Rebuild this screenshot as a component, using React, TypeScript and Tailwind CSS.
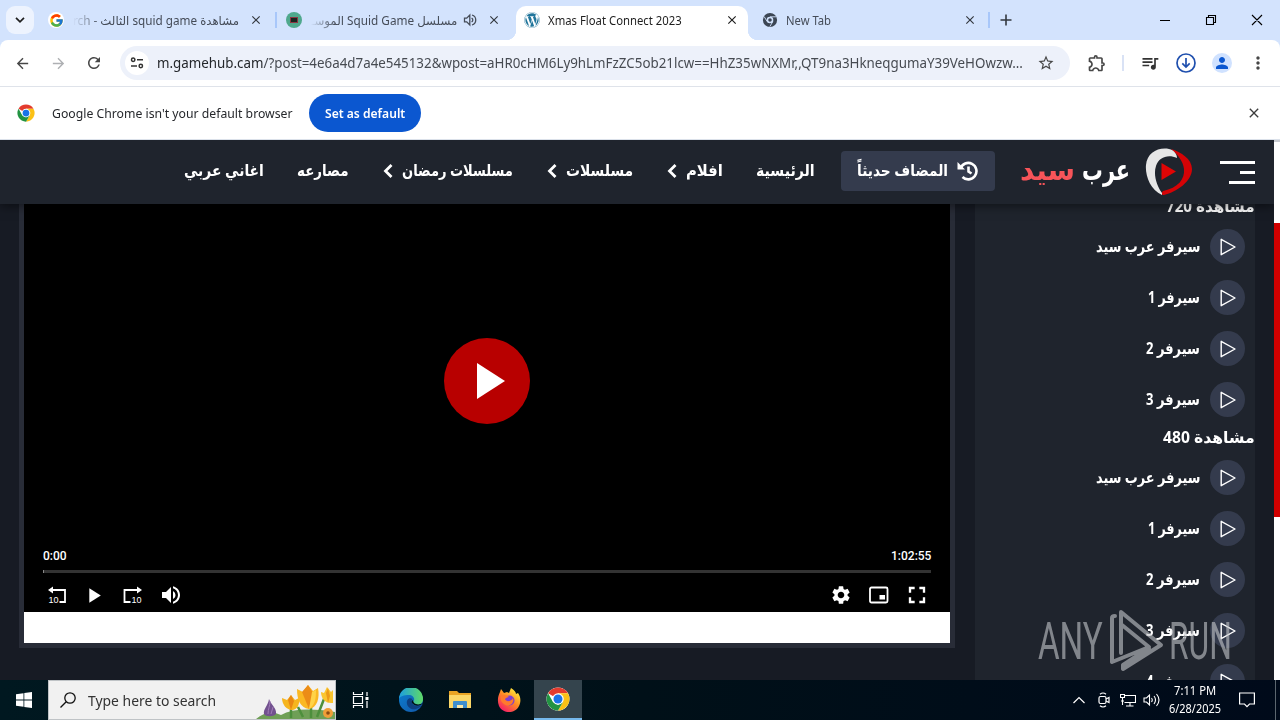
import { useLayoutEffect, useRef, useState } from "react"
import type { ReactNode } from "react"
import { FcGoogle } from "react-icons/fc"
import { FaWordpress } from "react-icons/fa"
import {
  MdArrowBack,
  MdArrowForward,
  MdClose,
  MdFullscreen,
  MdMoreVert,
  MdOutlineExtension,
  MdPerson,
  MdPlayArrow,
  MdQueueMusic,
  MdRefresh,
  MdSettings,
  MdStarBorder,
  MdVolumeUp,
} from "react-icons/md"

type FitProps = { w: number; rtl?: boolean; className?: string; children: ReactNode }

// Squeezes or stretches one line of text so it takes exactly `w` pixels
const Fit = ({ w, rtl, className = "", children }: FitProps) => {
  const ref = useRef<HTMLSpanElement>(null)
  const [scale, setScale] = useState(1)

  useLayoutEffect(() => {
    if (ref.current) setScale(w / ref.current.offsetWidth)
  }, [w])

  return (
    <span className={`block shrink-0 ${className}`} style={{ width: w }}>
      <span
        ref={ref}
        dir={rtl ? "rtl" : "ltr"}
        className="inline-block whitespace-nowrap origin-left"
        style={{ transform: `scaleX(${scale})` }}
      >
        {children}
      </span>
    </span>
  )
}

const ChromeLogo = ({ className = "" }) => (
  <svg viewBox="0 0 48 48" className={className}>
    <circle cx="24" cy="24" r="23" fill="#fff" />
    <path d="M24 24 4.1 12.5A23 23 0 0 1 43.9 12.5H24Z" fill="#e33b2e" />
    <path d="M24 12.5h19.9A23 23 0 0 1 24 47l10-17.2Z" fill="#fbc116" />
    <path d="M4.1 12.5 14 29.8 24 35.5l10-5.7L24 47A23 23 0 0 1 4.1 12.5Z" fill="#229342" />
    <circle cx="24" cy="24" r="11.5" fill="#fff" />
    <circle cx="24" cy="24" r="9" fill="#1a73e8" />
  </svg>
)

const ChromeMono = () => (
  <svg viewBox="0 0 16 16" className="w-4 h-4" fill="none" stroke="#3c4654">
    <circle cx="8" cy="8" r="5.2" strokeWidth="3.8" />
    <circle cx="8" cy="8" r="2.4" fill="#3c4654" stroke="#d3e3fd" strokeWidth="1.2" />
    <path d="M8 4.8h6M5.2 9.6 2.2 4.6M10.8 9.6l-3 5" stroke="#d3e3fd" strokeWidth=".9" />
  </svg>
)

const Separator = () => <div className="w-0.5 h-4 bg-[#a8c7fa] shrink-0"></div>

const TabStrip = () => {
  return (
    <div className="h-10 bg-[#d3e3fd] flex items-center text-[12px] text-[#454c58] pl-1.5">
      <div className="w-7 h-7 rounded-[9px] bg-[#edf3fe] flex items-center justify-center">
        <svg viewBox="0 0 10 6" className="w-2.5 h-1.5" fill="none" stroke="#1f1f1f" strokeWidth="1.7"><path d="m1 .8 4 4 4-4" /></svg>
      </div>

      <div className="w-[241px] pl-3.5 flex items-center shrink-0">
        <div className="w-4 h-4 rounded-full bg-white flex items-center justify-center"><FcGoogle size={15} /></div>
        <Fit w={166} rtl className="mt-px ml-[9px] [mask-image:linear-gradient(to_right,transparent,black_28px)]">مشاهدة squid game الثالث - rch</Fit>
        <MdClose size={14} className="ml-2.5 text-[#33383f]" />
      </div>
      <Separator />

      <div className="w-[239px] pl-[9px] flex items-center shrink-0">
        <div className="w-4 h-4 rounded-full bg-[#4fa88d] flex items-center justify-center"><div className="w-2 h-1.5 bg-[#17251f] border border-[#8c3542]"></div></div>
        <Fit w={146} rtl className="mt-px ml-[9px] [mask-image:linear-gradient(to_right,transparent,black_24px)]">مسلسل Squid Game الموسـ</Fit>
        <svg viewBox="0 0 14 14" className="w-3.5 h-3.5 ml-1.5" fill="none" stroke="#454c58" strokeWidth="1.3"><path d="M1.5 5.2h2.2L6.8 2v10L3.7 8.8H1.5ZM8.6 5c1.6 1 1.6 3 0 4M9 2c5 1.5 5 8.5 0 10" /></svg>
        <MdClose size={14} className="ml-[10px] text-[#33383f]" />
      </div>

      <div className="relative w-[232px] h-[34px] mt-1.5 pb-1.5 px-2 bg-white rounded-t-[10px] flex items-center shrink-0 text-[#1f1f1f]">
        <div className="absolute -left-2.5 bottom-0 w-2.5 h-2.5 bg-[radial-gradient(circle_at_0_0,transparent_10px,white_10.5px)]"></div>
        <div className="absolute -right-2.5 bottom-0 w-2.5 h-2.5 bg-[radial-gradient(circle_at_100%_0,transparent_10px,white_10.5px)]"></div>
        <FaWordpress size={16} className="text-[#21759b]" />
        <Fit w={134} className="mt-0.5 ml-2">Xmas Float Connect 2023</Fit>
        <MdClose size={14} className="ml-auto mr-px" />
      </div>

      <div className="w-[240px] pl-3.5 flex items-center shrink-0">
        <ChromeMono />
        <Fit w={45} className="mt-0.5 ml-2">New Tab</Fit>
        <MdClose size={14} className="ml-auto mr-[11px] text-[#33383f]" />
      </div>
      <Separator />
      <svg viewBox="0 0 12 12" className="w-3 h-3 ml-2.5" stroke="#33383f" strokeWidth="1.6"><path d="M6 .5v11M.5 6h11" /></svg>

      <svg viewBox="0 0 104 12" className="w-[104px] h-3 ml-auto mr-[17px]" fill="none" stroke="#000" strokeWidth="1.1">
        <path d="M1 6.5h10M47.5 3.5h7v7h-7ZM49.5 3.5v-2h7v7h-2M93 1l10 10M103 1 93 11" />
      </svg>
    </div>
  )
}

const Toolbar = () => {
  return (
    <div className="bg-[#d3e3fd]">
      <div className="h-[47px] bg-white rounded-t-lg border-b border-[#dfe3ea] flex items-center px-1 text-[#474747]">
        <div className="w-9 flex justify-center"><MdArrowBack size={17} /></div>
        <div className="w-9 flex justify-center text-[#aeb0b3]"><MdArrowForward size={17} /></div>
        <div className="w-9 flex justify-center"><MdRefresh size={18} /></div>

        <div className="w-[950px] h-[34px] ml-2 rounded-full bg-[#edf1fa] flex items-center pl-[5px] pr-[15px] shrink-0">
          <div className="w-6 h-6 rounded-full bg-white flex items-center justify-center">
            <svg viewBox="0 0 14 12" className="w-3.5 h-3" fill="none" stroke="#333" strokeWidth="1.5">
              <circle cx="3.2" cy="2.8" r="1.7" />
              <circle cx="10.8" cy="9" r="1.7" />
              <path d="M7 2.8h6M1 9h6" />
            </svg>
          </div>
          <Fit w={866} className="ml-2 -mt-0.5 text-[14px] text-[#474b52]">
            <span className="text-[#24272b]">m.gamehub.cam</span>/?post=4e6a4d7a4e545132&amp;wpost=aHR0cHM6Ly9hLmFzZC5ob21lcw==HhZ35wNXMr,,QT9na3HkneqgumaY39VeHOwzw...
          </Fit>
          <MdStarBorder size={18} className="ml-auto" />
        </div>

        <div className="w-9 ml-[9px] flex justify-center"><MdOutlineExtension size={20} /></div>
        <div className="w-0.5 h-4 mx-[7px] bg-[#d9e2f5]"></div>
        <div className="w-9 ml-px flex justify-center"><MdQueueMusic size={20} className="text-[#333]" /></div>
        <div className="w-9 flex justify-center">
          <svg viewBox="0 0 20 20" className="w-5 h-5" fill="none" stroke="#1f4fae" strokeWidth="1.7">
            <circle cx="10" cy="10" r="9" />
            <path d="M10 5v9M6.3 10.3l3.7 3.7 3.7-3.7" />
          </svg>
        </div>
        <div className="w-9 flex justify-center">
          <div className="w-5 h-5 rounded-full bg-[#d0e2ff] text-[#0b57d0] flex items-center justify-center"><MdPerson size={18} /></div>
        </div>
        <div className="w-9 flex justify-center"><MdMoreVert size={20} /></div>
      </div>
    </div>
  )
}

const InfoBar = () => {
  return (
    <div className="h-[53px] bg-white border-b border-[#dbe1ea] flex items-center pl-[17px] pr-[18px] text-[13px] text-[#26282c]">
      <ChromeLogo className="w-[18px] h-[18px]" />
      <Fit w={241} className="ml-[17px] mt-px">Google Chrome isn't your default browser</Fit>
      <button className="w-28 h-[38px] ml-4 rounded-full bg-[#0b57d0] text-white font-semibold flex items-center justify-center">
        <Fit w={80} className="mt-px">Set as default</Fit>
      </button>
      <MdClose size={16} className="ml-auto text-[#3c3c3c]" />
    </div>
  )
}

const Chevron = () => (
  <svg viewBox="0 0 10 14" className="w-2.5 h-3.5 mr-[9px] mt-0.5 shrink-0" fill="none" stroke="#fff" strokeWidth="2.8"><path d="M8.5 1 2.5 7l6 6" /></svg>
)

const Header = () => {
  return (
    <div className="relative z-10 h-16 bg-[#1f242d] shadow-[0_2px_10px_rgba(0,0,0,0.5)] flex items-center pl-[184px] pr-[19px] text-white text-[16px] font-bold leading-5">
      <Fit w={80} rtl className="-mt-1">اغاني عربي</Fit>
      <Fit w={52} rtl className="-mt-1 ml-[33px]">مصارعه</Fit>
      <div className="flex items-center ml-[34px] -mt-1"><Chevron /><Fit w={111} rtl>مسلسلات رمضان</Fit></div>
      <div className="flex items-center ml-[34px] -mt-1"><Chevron /><Fit w={67} rtl>مسلسلات</Fit></div>
      <div className="flex items-center ml-[34px] -mt-1"><Chevron /><Fit w={37} rtl>افلام</Fit></div>
      <Fit w={59} rtl className="-mt-1 ml-[33px]">الرئيسية</Fit>

      <div className="w-[154px] h-10 ml-[26px] -mt-0.5 rounded bg-[#343b4d] flex items-center px-4 shrink-0">
        <Fit w={91} rtl className="-mt-0.5">المضاف حديثاً</Fit>
        <svg viewBox="0 0 22 20" className="w-[22px] h-5 ml-[9px]" fill="none" stroke="#fff" strokeWidth="2.6">
          <path d="M3.5 7.5A8.200 8.200 0 1 1 5.5 16M11.5 5.500v5l3 2" />
          <path d="M.5 1v7.500h7.500Z" fill="#fff" stroke="none" />
        </svg>
      </div>

      <div className="flex items-center ml-[25px] -mt-1.5 text-[29px] leading-9">
        <Fit w={55} rtl className="text-[#f75459]">سيد</Fit>
        <Fit w={48} rtl className="ml-[7px]">عرب</Fit>
      </div>
      <svg viewBox="0 0 48 48" className="w-12 h-12 ml-[15px] shrink-0">
        <path d="M26 1c10 3 21 10 21 20 0 12-15 23-28 26-2 .5-3-2-1-4 15-3 22-12 21-22-1-8-6-14-13-20Z" fill="#d50306" />
        <path d="M17 47C5 42 0 27 1 17 2 5 13-1 24 1c5 1 8 5 8 9-9-4-18-1-21 8-3 9 1 20 6 27Z" fill="#e6e6e6" />
        <path d="M16.5 15v17L31 23.500Z" fill="#e00505" />
      </svg>

      <div className="flex flex-col items-end gap-[7px] ml-auto">
        <div className="w-[35px] h-[3px] bg-white"></div>
        <div className="w-[15px] h-[3px] bg-white"></div>
        <div className="w-[26px] h-[3px] bg-white"></div>
      </div>
    </div>
  )
}

const Player = () => {
  return (
    <div className="w-[936px] h-[444px] ml-[19px] border-[5px] border-t-0 border-[#282c37] bg-white shrink-0">
      <div className="h-[408px] bg-black flex flex-col px-[19px] text-white">
        <div className="w-[86px] h-[86px] mt-[134px] mx-auto rounded-full bg-[#b80000] flex items-center justify-center shrink-0">
          <svg viewBox="0 0 28 36" className="w-7 h-9 ml-[7px]" fill="#fff"><path d="M0 0v36l28-18Z" /></svg>
        </div>
        <div className="mt-auto flex justify-between text-[12px] leading-4 font-medium font-['Roboto',sans-serif]">
          <Fit w={24}>0:00</Fit>
          <Fit w={40}>1:02:55</Fit>
        </div>
        <div className="h-[3px] mt-[6px] bg-[#333] border-l border-[#888]"></div>
        <div className="h-[39px] flex items-center pl-[5px] pt-[5px]">
          <svg viewBox="0 0 18 18" className="w-[18px] h-[18px]" fill="none" stroke="#fff" strokeWidth="1.800">
            <path d="M4 4h13v12h-5.500" />
            <path d="m0 4 5-3.500v7Z" fill="#fff" stroke="none" />
            <text x="0.500" y="17" fill="#fff" stroke="none" className="text-[9px] font-['Liberation_Sans',sans-serif]">10</text>
          </svg>
          <MdPlayArrow size={25} className="ml-[15px]" />
          <svg viewBox="0 0 20 18" className="w-5 h-[18px] ml-[17px]" fill="none" stroke="#fff" strokeWidth="1.800">
            <path d="M14 4H1.500v12H7.500" />
            <path d="m19 4-5-3.500v7Z" fill="#fff" stroke="none" />
            <text x="8.500" y="17" fill="#fff" stroke="none" className="text-[9px] font-['Liberation_Sans',sans-serif]">10</text>
          </svg>
          <MdVolumeUp size={24} className="ml-4" />
          <MdSettings size={22} className="ml-auto" />
          <svg viewBox="0 0 20 18" className="w-5 h-[18px] ml-[17px]" fill="none" stroke="#fff" strokeWidth="1.800">
            <rect x="1" y="1.500" width="17.500" height="15" rx="1.500" />
            <path d="M10.500 9h5.500v4.500h-5.500Z" fill="#fff" stroke="none" />
          </svg>
          <MdFullscreen size={28} className="ml-[14px]" />
        </div>
      </div>
    </div>
  )
}

const servers = [
  { title: "مشاهدة 720", w: 89, items: ["سيرفر عرب سيد", "سيرفر 1", "سيرفر 2", "سيرفر 3"] },
  { title: "مشاهدة 480", w: 92, items: ["سيرفر عرب سيد", "سيرفر 1", "سيرفر 2", "سيرفر 3", "سيرفر 4"] },
]

const widths = [104, 52, 54, 54, 54]

const ServerList = () => {
  return (
    <div className="w-[280px] ml-5 -mt-[18px] bg-[#1f242d] text-white text-[16px] font-bold leading-5 shrink-0">
      {servers.map((group) => (
        <div key={group.title}>
          <div className="h-[43px] flex items-center justify-end pb-1"><Fit w={group.w} rtl>{group.title}</Fit></div>
          <div className="flex flex-col gap-4 pr-2.5">
            {group.items.map((name, i) => (
              <div key={name} className="h-[35px] flex items-center justify-end gap-2.5">
                <Fit w={widths[i]} rtl className="-mt-0.5">{name}</Fit>
                <div className="w-[35px] h-[35px] rounded-full bg-[#343b4d] flex items-center justify-center">
                  <svg viewBox="0 0 16 18" className="w-4 h-[18px]" fill="none" stroke="#fff" strokeWidth="1.400" strokeLinejoin="round"><path d="M1.200 1.300v15.400L15 9Z" /></svg>
                </div>
              </div>
            ))}
          </div>
        </div>
      ))}
    </div>
  )
}

const Watermark = () => {
  return (
    <div className="absolute right-12 bottom-2 z-20 h-16 flex items-center text-[#c5c7cb] opacity-60 font-['Roboto',sans-serif] text-[52px] leading-[64px]">
      <Fit w={65} className="mt-1">ANY</Fit>
      <svg viewBox="0 0 56 64" className="w-14 h-16 ml-1.5 mr-1" fill="none" stroke="currentColor" strokeWidth="4" strokeLinejoin="round" strokeLinecap="round">
        <path d="M12 45V4l40 33-38 24v-4l26-17M13 17l27 22L3 54V10q0-2 3-2" />
      </svg>
      <Fit w={63} className="mt-1">RUN</Fit>
    </div>
  )
}

const Page = () => {
  return (
    <div className="relative h-[540px] bg-[#171b24] flex overflow-hidden">
      <div className="w-[1274px] shrink-0">
        <Header />
        <div className="flex items-start h-[476px]">
          <Player />
          <ServerList />
        </div>
      </div>
      <div className="relative z-10 w-1.5 bg-white border-t-2 border-[#c9ccd2] pt-[81px]"><div className="h-[294px] bg-[#d00000]"></div></div>
      <Watermark />
    </div>
  )
}

const Flowers = () => (
  <svg viewBox="0 0 80 38" className="w-20 h-[38px] ml-auto">
    <path d="M1 38q12-10 25-4 16-9 54-3v7Z" fill="#6f9f56" />
    <path d="M14 18c2 6 8 9 7 15-3 3-10 3-12 0-1-5 4-8 5-15Z" fill="#72518f" />
    <path d="M15 20c0 5-2 8-2 13M18 26l-2 7" stroke="#a17db8" fill="none" />
    <path d="M36 37V27M56 37V25M62 36l7-18M48 36l-5-10" stroke="#4d8f3c" strokeWidth="2.500" />
    <path d="M27 17l5 2 4-5 4 5 4-2c1 7-2 12-7 12S27 24 27 17Z" fill="#f6b51f" />
    <path d="M42 8l6 3 5-7 5 6 5-3c2 10-1 20-9 21C45 27 42 18 42 8Z" fill="#fbb823" />
    <path d="m54 28-7-17 6-7 5 8Z" fill="#ec8c17" />
    <path d="m54 28 3-17 4-2c0 9-1 15-7 19Z" fill="#ffd347" />
    <path d="m36 29-3-10 3-5 3 6Z" fill="#e98714" />
    <path d="M66 11l3 1 3-6 4 5 2-2v13c-8 1-12-5-12-11Z" fill="#fbc52f" />
    <path d="m73 22-2-10 2-5 2 8Z" fill="#ed9a17" />
    <circle cx="73" cy="32" r="5" fill="#ef9e38" />
    <circle cx="73" cy="32" r="1.800" fill="#8a4b12" />
  </svg>
)

const EdgeIcon = () => (
  <svg viewBox="0 0 24 24" className="w-6 h-6">
    <defs>
      <linearGradient id="edgeTop" x1="0" x2="1"><stop stopColor="#1c9de0" /><stop offset="1" stopColor="#5fda67" /></linearGradient>
      <linearGradient id="edgeLow" y1="0" y2="1" x2="1"><stop stopColor="#0c7fd1" /><stop offset="1" stopColor="#1257a8" /></linearGradient>
    </defs>
    <circle cx="12" cy="12" r="12" fill="url(#edgeLow)" />
    <path d="M0 11A12 12 0 0 1 24 11c0 4-3 6-6 6-3 0-5-1-4-3 3-3 0-7-4-7C5 7 1 8 0 11Z" fill="url(#edgeTop)" />
    <path d="M24 16c-3 3-9 3-11-1-1-2 0-3 .5-4C10 9 7 12 8 16c1 4 5 6 9 5 3-1 6-3 7-5Z" fill="#0e3f80" />
    <path d="M24 15c-3 4-9 3-11 0-1-2 0-2 1-3 0 4 5 6 10 3Z" fill="#001018" />
  </svg>
)

const FolderIcon = () => (
  <svg viewBox="0 0 22 20" className="w-[22px] h-5">
    <path d="M0 1h8l2 2h12v15H0Z" fill="#e9a424" />
    <path d="M0 5h22v13H0Z" fill="#fbd768" />
    <path d="M4 18v-6q0-1 1-1h12q1 0 1 1v6h-4v-3H8v3Z" fill="#3f8fcf" />
    <path d="M8 15h6v3H8Z" fill="#fbe9a8" />
  </svg>
)

const FirefoxIcon = () => (
  <svg viewBox="0 0 24 24" className="w-6 h-6">
    <defs>
      <linearGradient id="fox" x1=".85" y1=".1" x2=".2" y2="1"><stop stopColor="#ffe93b" /><stop offset=".45" stopColor="#ff8a24" /><stop offset="1" stopColor="#f5156c" /></linearGradient>
    </defs>
    <path d="M3 4l1-3 3 4 3-1 2 1 2-5c3 2 5 4 5 6l2-1c3 4 3 9 1 13-4 8-16 8-20 0-2-5-1-10 1-14Z" fill="url(#fox)" />
    <circle cx="12.500" cy="12.500" r="5" fill="#7e3fd1" />
    <path d="M4 8c3-2 6-1 8 1-2 0-3 1-4 2 1 3 6 3 8-1 2 6-5 10-9 6-3-2-4-5-3-8Z" fill="#ff7a2c" />
  </svg>
)

const Taskbar = () => {
  return (
    <div className="h-10 bg-linear-to-r from-[#001820] via-[#001018] to-[#000a1a] flex items-center text-white">
      <div className="w-12 flex justify-center">
        <svg viewBox="0 0 16 16" className="w-4 h-4" fill="#fff"><path d="M0 2.200 7.500 1.200v6.400H0ZM8.300 1.100 16 0v7.600H8.300ZM0 8.400h7.500v6.400L0 13.800ZM8.300 8.400H16V16l-7.700-1.100Z" /></svg>
      </div>
      <div className="w-72 h-10 bg-[#f1f1f1] border border-[#bfc3c6] flex items-center pl-[11px] text-[#333] shrink-0">
        <svg viewBox="0 0 16 16" className="w-4 h-4 shrink-0" fill="none" stroke="#111" strokeWidth="1.300"><circle cx="10" cy="6" r="5.200" /><path d="M6.200 9.800.5 15.500" /></svg>
        <Fit w={128} className="ml-3 text-[15px]">Type here to search</Fit>
        <Flowers />
      </div>
      <div className="w-12 flex justify-center">
        <svg viewBox="0 0 17 16" className="w-[17px] h-4" fill="none" stroke="#fff" strokeWidth="1.200"><path d="M1.500 4.500h9v7h-9ZM1.500 0v2.500h9V0M1.500 16v-2.500h9V16M15 0v4M15 9v7" /><path d="M13.500 5h3v3h-3Z" fill="#fff" stroke="none" /></svg>
      </div>
      <div className="w-[3px]"></div>
      <div className="w-12 flex justify-center"><EdgeIcon /></div>
      <div className="w-[49px] flex justify-center"><FolderIcon /></div>
      <div className="w-[49px] flex justify-center"><FirefoxIcon /></div>
      <div className="w-12 h-10 ml-px bg-[#34444d] border-b-2 border-[#76b9ed] flex justify-center items-center"><ChromeLogo className="w-6 h-6" /></div>

      <div className="flex items-center ml-auto shrink-0">
        <svg viewBox="0 0 12 8" className="w-3 h-2" fill="none" stroke="#fff" strokeWidth="1.200"><path d="m.5 7 5.500-5.500L11.500 7" /></svg>
        <svg viewBox="0 0 12 16" className="w-3 h-4 ml-[13px]" fill="none" stroke="#fff" strokeWidth="1.200"><rect x="1" y="4.500" width="7" height="7" rx="1.500" /><path d="m8 7 3-1.500v5L8 9M2 2.200q3-2.400 6 0M2 13.800q3 2.400 6 0" /></svg>
        <svg viewBox="0 0 16 14" className="w-4 h-3.5 ml-2.5" fill="none" stroke="#fff" strokeWidth="1.100"><path d="M5 2.500h10.500v7H4.500M.5 1.500h4v3h-4ZM2.500 4.500V12M10 9.500v3M6 13h7.500M1 8h3" /></svg>
        <svg viewBox="0 0 17 14" className="w-[17px] h-3.5 ml-[7px]" fill="none" stroke="#fff" strokeWidth="1.100"><path d="M1 5h2.500L6.500 2v10L3.500 9H1ZM8.500 5q1.500 2 0 4M11 3q3 4 0 8M13.500 1q5 6 0 12" /></svg>
        <div className="w-[52px] ml-[9px] flex flex-col items-center text-[12px] leading-[18px]">
          <Fit w={42}>7:11 PM</Fit>
          <Fit w={52}>6/28/2025</Fit>
        </div>
        <svg viewBox="0 0 16 16" className="w-4 h-4 ml-[18px] mr-5" fill="none" stroke="#fff" strokeWidth="1.200"><path d="M.6 1h14.800v11H10.500L8 14.600 5.500 12H.6Z" /></svg>
        <div className="w-px h-10 bg-[#5c666f] mr-1"></div>
      </div>
    </div>
  )
}

export default function App() {
  return (
    <div className="w-[1280px] h-[720px] overflow-hidden font-['Noto_Sans','DejaVu_Sans',sans-serif]">
      <TabStrip />
      <Toolbar />
      <InfoBar />
      <Page />
      <Taskbar />
    </div>
  )
}
